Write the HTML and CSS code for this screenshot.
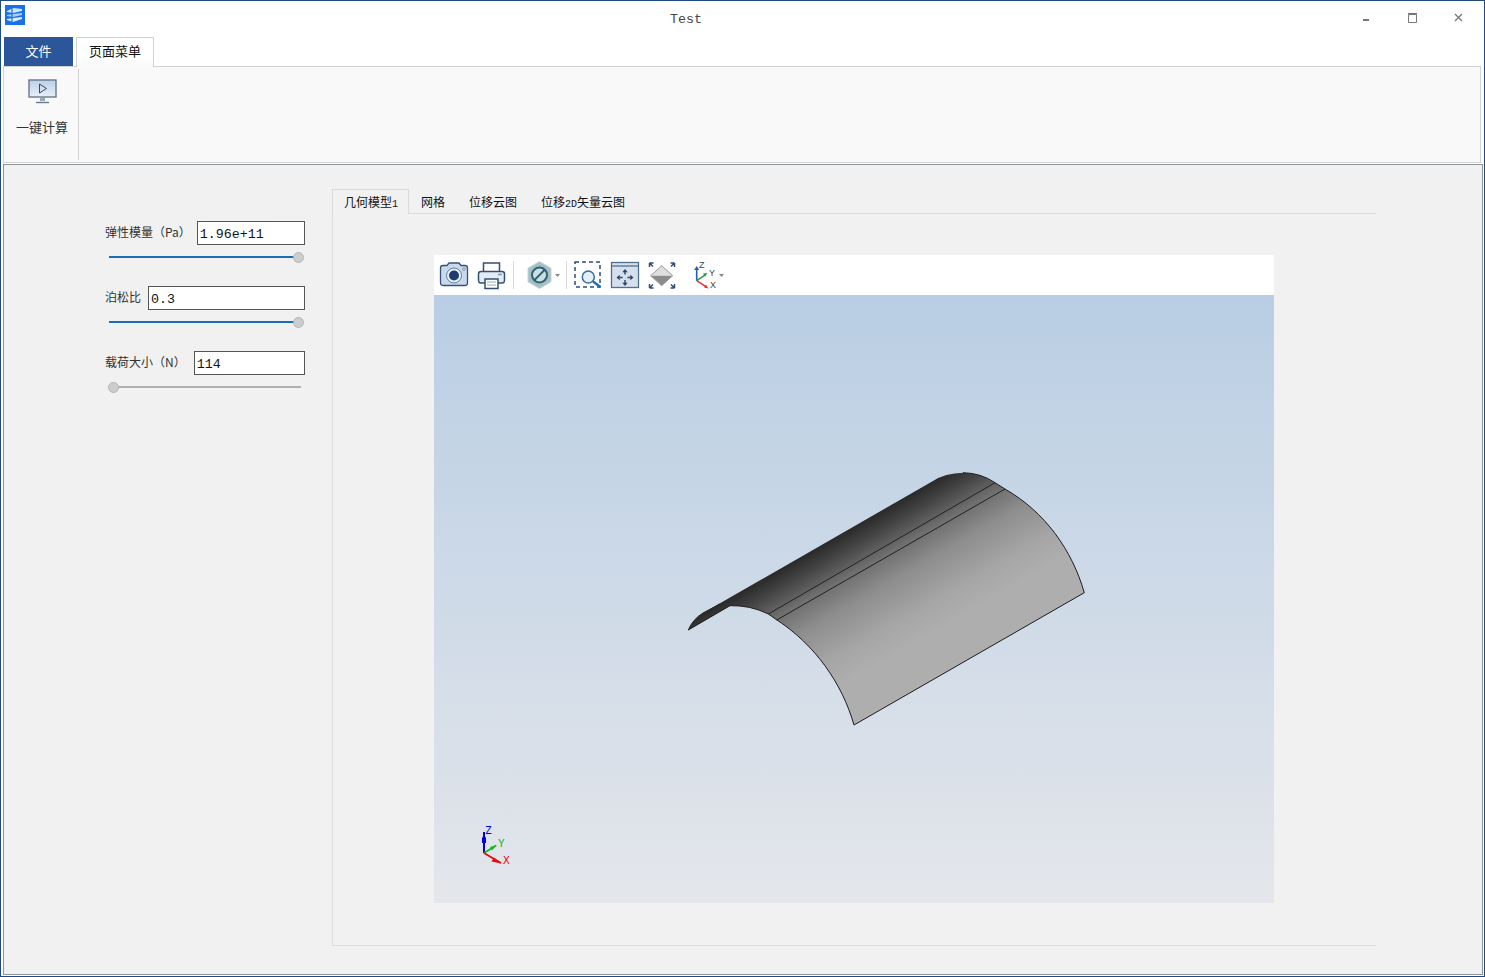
FILE: index.html
```html
<!DOCTYPE html>
<html lang="zh">
<head>
<meta charset="utf-8">
<title>Test</title>
<link rel="stylesheet" href="styles.css">
</head>
<body>
<div class="window">
  <header class="titlebar">
    <svg class="app-icon" width="20" height="20" viewBox="0 0 20 20">
      <rect width="20" height="20" fill="#1672e6"/>
      <path d="M2 6l6-3 9 1v2l-9 2-6-1z" fill="#cfe3fa"/>
      <path d="M2 10l6-1 9-1v2l-9 2-6-1z" fill="#a9cdf5"/>
      <path d="M2 14l6-1 9-1v2l-9 3-6-2z" fill="#dbe9fb"/>
      <path d="M7 3v14" stroke="#1672e6" stroke-width="1.2"/>
    </svg>
    <div class="title">Test</div>
    <div class="controls">
      <svg class="ctl-min" width="8" height="4" viewBox="0 0 8 4"><rect x="1" y="1" width="6" height="2" fill="#777"/></svg>
      <svg width="10" height="10" viewBox="0 0 10 10"><path d="M.5 1.5h8v8h-8z" fill="none" stroke="#777"/><path d="M0 .5h9" stroke="#777" stroke-width="1.4"/></svg>
      <svg width="9" height="9" viewBox="0 0 9 9"><path d="M1 1l7 7M8 1L1 8" stroke="#777" stroke-width="1.3"/></svg>
    </div>
  </header>

  <nav class="ribbon-tabs">
    <div class="file-tab">文件</div>
    <div class="page-tab">页面菜单</div>
  </nav>

  <section class="ribbon">
    <div class="ribbon-group">
      <svg class="ribbon-icon" width="30" height="26" viewBox="0 0 30 26">
        <defs><linearGradient id="scr" x1="0" y1="0" x2="0" y2="1"><stop offset="0" stop-color="#bcd0e8"/><stop offset="1" stop-color="#e8eff7"/></linearGradient></defs>
        <rect x="1" y="1" width="27" height="17" fill="url(#scr)" stroke="#67788f" stroke-width="1.4"/>
        <path d="M11.5 5v9l7-4.500z" fill="none" stroke="#33496b" stroke-width="1"/>
        <path d="M12 19h5v3h-5z" fill="#9aa8ba"/>
        <path d="M8 23.500h13" stroke="#67788f" stroke-width="1.4"/>
      </svg>
      <span class="ribbon-label">一键计算</span>
    </div>
  </section>

  <main class="main">
    <aside class="params">
      <div class="param">
        <div class="param-row"><label class="param-label label-pa">弹性模量（Pa）</label><div class="field">1.96e+11</div></div>
        <div class="slider"><div class="fill fill-full"></div><div class="thumb thumb-end"></div></div>
      </div>
      <div class="param">
        <div class="param-row"><label class="param-label">泊松比</label><div class="field">0.3</div></div>
        <div class="slider"><div class="fill fill-full"></div><div class="thumb thumb-end"></div></div>
      </div>
      <div class="param">
        <div class="param-row"><label class="param-label label-n">载荷大小（N）</label><div class="field">114</div></div>
        <div class="slider"><div class="thumb thumb-start"></div></div>
      </div>
    </aside>

    <section class="tabpane">
      <div class="tabbar">
        <div class="tab tab-active">几何模型<span class="tab-latin">1</span></div>
        <div class="tab">网格</div>
        <div class="tab">位移云图</div>
        <div class="tab">位移<span class="tab-latin">2D</span>矢量云图</div>
      </div>
      <div class="tabbody">
        <div class="viewer">
          <div class="toolbar">
            <svg class="tool" width="30" height="30" viewBox="0 0 30 30">
              <path d="M1.500 8q0-2.500 2.500-2.500h4l2-2.500h10l2 2.500h4q2.500 0 2.500 2.500v15q0 2.500-2.500 2.500H4q-2.500 0-2.500-2.500z" fill="#c9d9eb" stroke="#34527c" stroke-width="1.300"/>
              <circle cx="15" cy="15.500" r="7.500" fill="#e9f0f7" stroke="#5b7da6"/>
              <circle cx="15" cy="15.500" r="5" fill="#1f3d6e"/>
              <circle cx="25" cy="9" r="1.300" fill="#fff" stroke="#34527c" stroke-width=".6"/>
            </svg>
            <svg class="tool gap-7" width="30" height="30" viewBox="0 0 30 30">
              <path d="M7.500 12V3h16v9" fill="#fff" stroke="#34506f" stroke-width="1.500"/>
              <path d="M9 23H4.500q-2-.5-2-2.500V14q0-2.500 2.500-2.500h21q2.500 0 2.500 2.500v6.500q0 2-2 2.500H22" fill="#e3ebf4" stroke="#34506f" stroke-width="1.500"/>
              <rect x="9" y="19" width="13" height="9.500" fill="#fff" stroke="#34506f" stroke-width="1.500"/>
              <path d="M11 22h9M11 25h9" stroke="#9aa9ba"/>
              <path d="M22 14.500h4" stroke="#8295aa" stroke-width="1.500"/>
            </svg>
            <div class="sep gap-7"></div>
            <svg class="tool gap-11" width="37" height="30" viewBox="0 0 37 30">
              <path d="M14.500 1.500L26 8.200v13.600L14.500 28.500 3 21.800V8.200z" fill="#a5c0c4" stroke="#c2d5d8"/>
              <circle cx="14.500" cy="15" r="7.500" fill="#cfdee0" stroke="#2c6474" stroke-width="2"/>
              <path d="M9.500 20l10-10" stroke="#2c6474" stroke-width="2"/>
              <path d="M30 14h5l-2.500 3z" fill="#888"/>
            </svg>
            <div class="sep gap-4"></div>
            <svg class="tool gap-6" width="30" height="30" viewBox="0 0 30 30">
              <rect x="2" y="2" width="25" height="25" fill="none" stroke="#2d4d78" stroke-width="1.500" stroke-dasharray="4 3"/>
              <circle cx="15.300" cy="17" r="6" fill="#e6eff7" stroke="#3a6ea5" stroke-width="1.500"/>
              <path d="M20 21.500l7.500 5.500" stroke="#1f6fb0" stroke-width="2.400"/>
            </svg>
            <svg class="tool gap-7" width="30" height="30" viewBox="0 0 30 30">
              <rect x="1.500" y="2.500" width="27" height="25" fill="#d6e0ec" stroke="#51708f" stroke-width="1.300"/>
              <path d="M1.500 6h27" stroke="#51708f" stroke-width="1.300"/>
              <path d="M15 11.500v3M15 20v3M9.500 17.500h3M17.500 17.500h3" stroke="#23446f" stroke-width="1.400"/>
              <path d="M15 9l2.700 3.200h-5.400zM15 26l2.700-3.200h-5.400zM6.500 17.500l3.200-2.700v5.400zM23.500 17.500l-3.200-2.700v5.400z" fill="#23446f"/>
            </svg>
            <svg class="tool gap-7" width="30" height="30" viewBox="0 0 30 30">
              <path d="M14.700 5.700l11 10H3.700z" fill="#dedede"/>
              <path d="M14.700 25.700l-11-10h22z" fill="#8c8c8c"/>
              <path d="M14.700 5.700l11 10-11 10-11-10z" fill="none" stroke="#9a9a9a"/>
              <path d="M2.500 3v4M2.500 3h4M2.500 3L6 6.500M27.500 3v4M27.500 3h-4M27.500 3L24 6.500M2.500 28v-4M2.500 28h4M2.500 28L6 24.500M27.500 28v-4M27.500 28h-4M27.500 28L24 24.500" fill="none" stroke="#2d4d78" stroke-width="1.500"/>
            </svg>
            <svg class="tool gap-15" width="35" height="30" viewBox="0 0 35 30">
              <path d="M4.700 20.700V8" stroke="#1f5fb5" stroke-width="1.600"/>
              <path d="M4.700 6l2.500 4h-5z" fill="#1f5fb5"/>
              <path d="M4.700 20.700l9-6" stroke="#2a9a4a" stroke-width="1.600"/>
              <path d="M15.500 13l-4.500.5 2 3z" fill="#2a9a4a"/>
              <path d="M4.700 20.700l10 6.500" stroke="#e03a3a" stroke-width="1.600"/>
              <path d="M16.500 28.500l-2.500-4-2 3z" fill="#e03a3a"/>
              <text class="axis-label" x="7" y="8">Z</text>
              <text class="axis-label" x="17" y="15.500">Y</text>
              <text class="axis-label" x="18" y="27.500">X</text>
              <path d="M27 14h5l-2.500 3z" fill="#888"/>
            </svg>
          </div>
          <svg class="canvas" width="840" height="608" viewBox="434 295 840 608">
            <defs>
              <linearGradient id="shell" gradientUnits="userSpaceOnUse" x1="820" y1="547" x2="885" y2="660">
                <stop offset="0" stop-color="#2b2b2b"/>
                <stop offset=".12" stop-color="#444"/>
                <stop offset=".3" stop-color="#6f6f6f"/>
                <stop offset=".5" stop-color="#8d8d8d"/>
                <stop offset=".8" stop-color="#a6a6a6"/>
                <stop offset="1" stop-color="#aeaeae"/>
              </linearGradient>
            </defs>
            <path d="M688.300 630Q693 619 703 613L933 481Q945 473 963 472.700Q981 473 995 482.700L1005 489C1045 512 1072 550 1084.300 592.700L854 725C842 683 815 645 777 620L768.300 614Q750 605 730 605.700Z" fill="url(#shell)"/>
            <path d="M688.300 630L730 605.700Q750 605 768.300 614L777 620C815 645 842 683 854 725L1084.300 592.700C1072 550 1045 512 1005 489L995 482.700Q981 473 963 472.700" fill="none" stroke="#1c1c1c" stroke-width="1"/>
            <path d="M768.300 614L995 482.700M776.700 620L1005 489" fill="none" stroke="#222" stroke-width="1"/>
            <path d="M688.300 630Q693 619 703 613L720 604" fill="none" stroke="#222"/>
            <path d="M484 853V832" stroke="#0000e0" stroke-width="2"/>
            <path d="M484 835l-2 3v5h4v-5z" fill="#0000e0"/>
            <path d="M484 853l12-7.500" stroke="#10c020" stroke-width="2"/>
            <path d="M497 845l-7 2 2 3.500z" fill="#10c020"/>
            <path d="M484 853l17 10" stroke="#e01010" stroke-width="2"/>
            <path d="M501 863.500l-7-6-2.500 4z" fill="#e01010"/>
            <text class="triad-z" x="485" y="834">Z</text>
            <text class="triad-y" x="498" y="847">Y</text>
            <text class="triad-x" x="503" y="864">X</text>
          </svg>
        </div>
      </div>
    </section>
  </main>
</div>
</body>
</html>
```

FILE: styles.css
```css
* { box-sizing: border-box; }
html, body { margin: 0; padding: 0; background: #fff; }
body { font-family: "Noto Sans CJK SC", "Liberation Sans", sans-serif; font-size: 13px; color: #222; }

.window {
  width: 1485px;
  height: 977px;
  border: 1px solid #1e4a80;
  background: #fff;
  display: flex;
  flex-direction: column;
  overflow: hidden;
}

/* Title bar */
.titlebar { height: 35px; flex: none; display: flex; align-items: flex-start; padding: 4px 0 0 4px; }
.app-icon { flex: none; }
.title { margin: 6px 0 0 645px; font-family: "Liberation Mono", monospace; font-size: 13.300px; line-height: 17px; color: #444; }
.controls { margin-left: auto; display: flex; align-items: flex-start; padding: 8px 21px 0 0; gap: 36px; }
.ctl-min { margin: 5px 2px 0 0; }

/* Ribbon */
.ribbon-tabs { height: 30px; flex: none; display: flex; align-items: flex-end; padding-left: 3px; gap: 3px; }
.file-tab { width: 69px; height: 29px; background: #2b579a; color: #fff; text-align: center; line-height: 27px; font-size: 13px; }
.page-tab { width: 78px; height: 30px; margin-bottom: -1px; position: relative; z-index: 1; border: 1px solid #d2d2d2; border-bottom: 0; text-align: center; line-height: 26px; background: linear-gradient(#fff, #fff 60%, #f9f9f9); color: #111; }
.ribbon { height: 97px; flex: none; margin: 0 3px 0 2px; background: #f9f9f9; border: 1px solid #d2d2d2; padding-top: 2px; }
.ribbon-group { width: 75px; height: 91px; border-right: 1px solid #d2d2d2; display: flex; flex-direction: column; align-items: center; padding: 10px 0 0 2px; }
.ribbon-icon { margin-left: 2px; }
.ribbon-label { margin-top: 12px; line-height: 20px; color: #333; }

/* Main */
.main { height: 811px; flex: none; margin: 1px 1px 0 2px; background: #f1f1f1; border: 1px solid #8d949c; display: flex; }
.params { width: 328px; flex: none; padding: 56px 0 0 101px; }
.param { width: 200px; height: 65px; }
.param-row { display: flex; align-items: flex-start; gap: 7px; }
.param-label { flex: none; line-height: 22px; font-size: 12px; color: #333; }
.label-pa { margin-right: -1px; }
.label-n { margin-right: 1px; }
.field { flex: 1; height: 24px; background: #fff; border: 1px solid #555; font-family: "Liberation Mono", monospace; font-size: 13.300px; line-height: 25px; padding-left: 2px; color: #111; }
.slider { position: relative; width: 192px; height: 2px; margin: 11px 0 0 4px; background: #b0b0b0; }
.fill { height: 2px; background: #1a6cb8; }
.fill-full { width: 100%; }
.thumb { position: absolute; top: -4px; width: 11px; height: 11px; border-radius: 50%; background: #cdcdcd; border: 1px solid #b5b5b5; }
.thumb-end { right: -3px; }
.thumb-start { left: -1px; }

/* Tabs */
.tabpane { width: 1044px; height: 757px; flex: none; margin-top: 24px; display: flex; flex-direction: column; }
.tabbar { height: 25px; flex: none; display: flex; position: relative; margin-bottom: -1px; }
.tab { height: 25px; padding: 0 12px; line-height: 25px; font-size: 12px; color: #111; white-space: nowrap; }
.tab-active { width: 77px; padding: 0 0 0 11px; border: 1px solid #d9d9d9; border-bottom: 0; line-height: 23px; background: #f1f1f1; }
.tab-latin { font-family: "Liberation Mono", monospace; font-size: 10px; }
.tabbody { flex: 1; border: 1px solid #dcdcdc; border-right: 0; padding: 41px 0 0 101px; }
.viewer { width: 840px; }

.toolbar { height: 40px; background: #fff; display: flex; align-items: center; padding-left: 5px; }
.tool { flex: none; display: block; }
.sep { width: 1px; height: 28px; background: #d8d8d8; flex: none; }
.gap-4 { margin-left: 4px; }
.gap-6 { margin-left: 6px; }
.gap-7 { margin-left: 7px; }
.gap-11 { margin-left: 11px; }
.gap-15 { margin-left: 15px; }
.axis-label { font-family: "Liberation Sans", sans-serif; font-size: 9px; fill: #444; }

.canvas { display: block; background: linear-gradient(#b9cee4, #e4e6eb); }
.triad-z, .triad-y, .triad-x { font-family: "DejaVu Sans Mono", monospace; font-size: 11px; }
.triad-z { fill: #0000e0; }
.triad-y { fill: #10c020; }
.triad-x { fill: #e01010; }
```
